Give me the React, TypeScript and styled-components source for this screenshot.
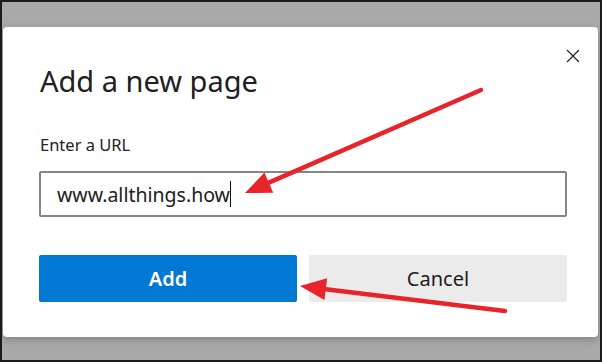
import React from 'react';
import styled, { createGlobalStyle } from 'styled-components';

const GlobalStyle = createGlobalStyle`
  html, body {
    margin: 0;
    padding: 0;
    background: #a9a9a9;
  }
`;

const Backdrop = styled.div`
  box-sizing: border-box;
  width: 602px;
  height: 362px;
  border: 2px solid #1c1c1c;
  background: #a9a9a9;
  padding: 25px 2px 0 1px;
  position: relative;
  overflow: hidden;
  font-family: 'Noto Sans', 'Open Sans', sans-serif;
`;

const Dialog = styled.div`
  box-sizing: border-box;
  width: 595px;
  height: 310px;
  background: #fff;
  border-radius: 4px;
  box-shadow: 0 3px 9px rgba(0, 0, 0, 0.22);
  padding: 0 31px 0 36px;
  position: relative;
  display: flex;
  flex-direction: column;
`;

const CloseButton = styled.button`
  all: unset;
  position: absolute;
  top: 22px;
  right: 18px;
  width: 14px;
  height: 14px;
  display: flex;
  color: #222;
`;

const Title = styled.h1`
  margin: 35px 0 0;
  font-size: 29px;
  font-weight: 400;
  line-height: 38px;
  color: #202020;
  padding-left: 1px;
`;

const Label = styled.label`
  margin-top: 35px;
  font-size: 16.5px;
  line-height: 20px;
  color: #222;
  padding-left: 1px;
`;

const UrlField = styled.div`
  box-sizing: border-box;
  margin-top: 16px;
  width: 528px;
  height: 46px;
  border: 2px solid #858585;
  border-radius: 2px;
  display: flex;
  align-items: center;
  padding-left: 16px;
  font-size: 19.5px;
  color: #202020;
`;

const Caret = styled.span`
  display: inline-block;
  width: 1px;
  height: 26px;
  background: #111;
`;

const ButtonRow = styled.div`
  margin-top: 38px;
  display: grid;
  grid-template-columns: 258px 258px;
  gap: 12px;
`;

const DialogButton = styled.button<{ $primary?: boolean }>`
  all: unset;
  height: 47px;
  border-radius: 2px;
  display: flex;
  align-items: center;
  justify-content: center;
  font-size: 20px;
  font-weight: ${(p) => (p.$primary ? 600 : 400)};
  background: ${(p) => (p.$primary ? '#0078d4' : '#ebebeb')};
  color: ${(p) => (p.$primary ? '#fff' : '#1c1c1c')};
`;

const Annotations = styled.svg`
  position: absolute;
  left: -2px;
  top: -2px;
  pointer-events: none;
`;

function Arrow({ x1, y1, x2, y2 }: { x1: number; y1: number; x2: number; y2: number }) {
  const ang = Math.atan2(y2 - y1, x2 - x1);
  const len = 26;
  const half = 11;
  const bx = x2 - len * Math.cos(ang);
  const by = y2 - len * Math.sin(ang);
  const px = -Math.sin(ang) * half;
  const py = Math.cos(ang) * half;
  return (
    <g>
      <line x1={x1} y1={y1} x2={bx} y2={by} stroke="#e8232a" strokeWidth={4.5} strokeLinecap="round" />
      <polygon
        points={`${x2},${y2} ${bx + px},${by + py} ${bx - px},${by - py}`}
        fill="#e8232a"
      />
    </g>
  );
}

export default function App() {
  return (
    <>
      <GlobalStyle />
      <Backdrop>
        <Dialog>
          <CloseButton aria-label="Close">
            <svg width="14" height="14" viewBox="0 0 14 14">
              <path d="M1 1 L13 13 M13 1 L1 13" stroke="#222" strokeWidth="1.2" />
            </svg>
          </CloseButton>
          <Title>Add a new page</Title>
          <Label>Enter a URL</Label>
          <UrlField>
            www.allthings.how
            <Caret />
          </UrlField>
          <ButtonRow>
            <DialogButton $primary>Add</DialogButton>
            <DialogButton>Cancel</DialogButton>
          </ButtonRow>
        </Dialog>
        <Annotations width="602" height="362" viewBox="0 0 602 362">
          <Arrow x1={481} y1={90} x2={245} y2={193} />
          <Arrow x1={505} y1={311} x2={300} y2={286} />
        </Annotations>
      </Backdrop>
    </>
  );
}
